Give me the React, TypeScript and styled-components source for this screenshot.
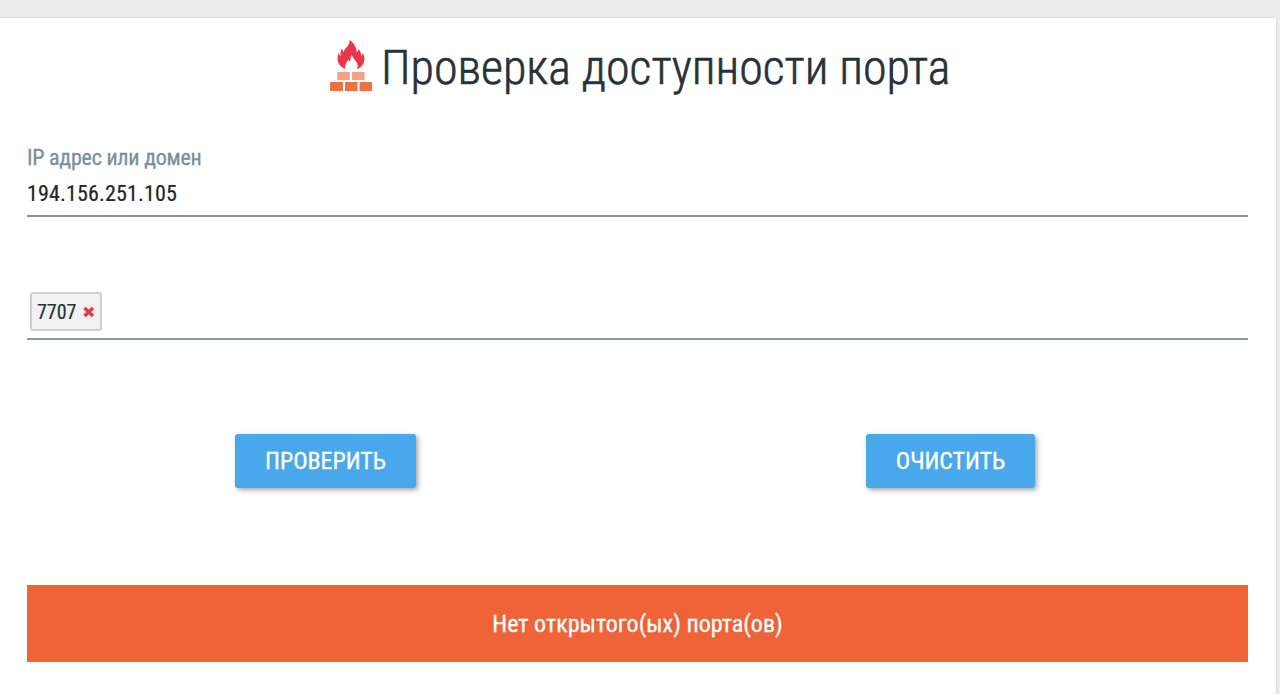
import React from "react";
import styled, { createGlobalStyle } from "styled-components";

const GlobalStyle = createGlobalStyle`
  * {
    box-sizing: border-box;
  }
  body {
    margin: 0;
    background: #ededee;
    font-family: "Roboto Condensed", Roboto, sans-serif;
    font-stretch: condensed;
    color: #263238;
  }
`;

const Page = styled.div`
  height: 694px;
  padding: 18px 4px 0 0;
  overflow: hidden;
`;
const Card = styled.main`
  height: 700px;
  padding: 16px 28px 0 27px;
  background: #fff;
  box-shadow: 0 0 3px rgba(60, 64, 90, 0.2);
`;
const Title = styled.h1`
  display: flex;
  align-items: center;
  gap: 8px;
  height: 68px;
  margin: 0;
  padding-left: 303px;
  font-size: 48px;
  font-weight: 300;
  line-height: 68px;
  white-space: nowrap;
  -webkit-text-stroke: 0.6px #263238;
`;
const FirewallIcon = styled.svg`
  flex: none;
  width: 43px;
  height: 52px;
  margin-top: -5px;
`;
const Field = styled.div`
  display: flex;
  flex-direction: column;
  height: 77px;
  margin-top: 38px;
  border-bottom: 2px solid #8b9099;
`;
const Label = styled.label`
  height: 34px;
  color: #78909c;
  font-size: 22px;
  line-height: 35px;
  letter-spacing: -0.23px;
  -webkit-text-stroke: 0.3px #78909c;
`;
const Input = styled.input`
  height: 38px;
  padding: 0;
  border: 0;
  outline: 0;
  background: none;
  color: #212529;
  font: inherit;
  font-size: 22px;
  letter-spacing: 0.15px;
  -webkit-text-stroke: 0.2px #212529;
`;
const TagField = styled.div`
  height: 49px;
  margin-top: 74px;
  padding: 1px 3px;
  border-bottom: 2px solid #8699a3;
`;
const Tag = styled.span`
  display: flex;
  align-items: center;
  gap: 6px;
  width: 72px;
  height: 39px;
  padding-left: 5px;
  border: 2px solid #cfcfcf;
  border-radius: 3px;
  background: #f1f1f1;
  font-size: 20px;
  -webkit-text-stroke: 0.2px #263238;
`;
const Actions = styled.div`
  display: flex;
  gap: 450px;
  margin-top: 94px;
  padding-left: 208px;
`;
const Button = styled.button<{ $width: number }>`
  width: ${(p) => p.$width}px;
  height: 54px;
  padding: 0;
  border: 0;
  border-radius: 3px;
  background: #49a7ec;
  box-shadow: 2px 2px 5px rgba(0, 0, 0, 0.36);
  color: #fff;
  font: inherit;
  font-size: 24px;
  letter-spacing: -0.05px;
  text-transform: uppercase;
  -webkit-text-stroke: 0.3px #fff;
`;
const Alert = styled.div`
  height: 77px;
  margin-top: 97px;
  background: #ee6337;
  color: #fff;
  font-size: 24px;
  line-height: 79px;
  letter-spacing: 0.04px;
  text-align: center;
  -webkit-text-stroke: 0.3px #fff;
`;

const App: React.FC = () => {
  return (
    <Page>
      <GlobalStyle />
      <Card>
        <Title>
          <FirewallIcon viewBox="0 0 43 52">
            <path
              fill="#e9354d"
              d="M19.700 0C23.500 2.500 26.200 6.500 26.800 12.200C27.800 11.500 28.200 10.500 28.200 9C30 10.500 31.200 13 31.400 16C32.300 15.200 32.800 14.200 32.800 12.500C36.200 20 34.300 26 27 29.300C29 24.500 26.200 21.500 24.500 19.500C23 17.800 22.300 16.500 21.800 14.800C21 16.500 20.400 18.500 20.200 21.500C19.400 21 19 20.500 18.600 19.800C16 22.800 14.500 25.500 15.600 29.300C8.600 26.500 5.700 20.500 8.700 12.500C9 14.200 9.600 15.400 10.600 16.200C10.200 13 10.500 10.500 11.800 8.200C12.200 10 12.800 11 13.800 12C14.500 7.500 19.800 6.500 19.700 0Z"
            />
            <path fill="#f6a184" d="M7.300 32h12.500v8H7.300zM22 32h12.500v8H22z" />
            <path
              fill="#ee7043"
              d="M0 43q0-1 1-1h12v9H1q-1 0-1-1zM15 42h12.500v9H15zM29.500 42H41q1 0 1 1v7q0 1-1 1H29.500z"
            />
          </FirewallIcon>
          Проверка доступности порта
        </Title>
        <Field>
          <Label htmlFor="host">IP адрес или домен</Label>
          <Input id="host" defaultValue="194.156.251.105" />
        </Field>
        <TagField>
          <Tag>
            7707
            <svg width="12" height="12" viewBox="0 0 12 12">
              <path d="M1.500 2l8.500 8M10 2l-8.500 8" stroke="#e53950" strokeWidth="3.6" />
            </svg>
          </Tag>
        </TagField>
        <Actions>
          <Button $width={181}>Проверить</Button>
          <Button $width={169}>Очистить</Button>
        </Actions>
        <Alert>Нет открытого(ых) порта(ов)</Alert>
      </Card>
    </Page>
  );
};

export default App;
